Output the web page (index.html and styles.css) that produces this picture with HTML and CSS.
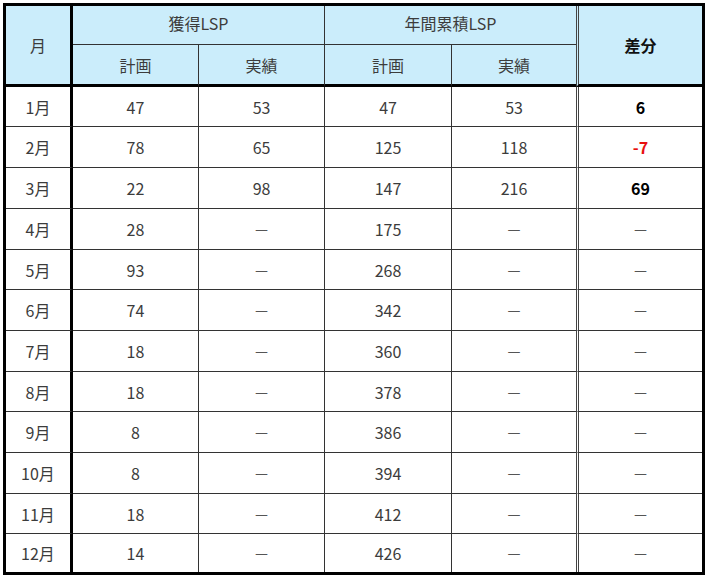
FILE: index.html
```html
<!DOCTYPE html>
<html lang="ja">
<head>
<meta charset="utf-8">
<title>LSP</title>
<link rel="stylesheet" href="styles.css">
</head>
<body>
<table class="lsp">
  <colgroup>
    <col class="c-month">
    <col class="c-a">
    <col class="c-b">
    <col class="c-c">
    <col class="c-d">
    <col class="c-diff">
  </colgroup>
  <thead>
    <tr class="h1">
      <th rowspan="2" class="month">月</th>
      <th colspan="2" class="grp sep">獲得LSP</th>
      <th colspan="2" class="grp">年間累積LSP</th>
      <th rowspan="2" class="diff">差分</th>
    </tr>
    <tr class="h2">
      <th class="sep">計画</th>
      <th class="sep">実績</th>
      <th class="sep">計画</th>
      <th>実績</th>
    </tr>
  </thead>
  <tbody>
    <tr><td class="month">1月</td><td class="sep">47</td><td class="sep">53</td><td class="sep">47</td><td>53</td><td class="diff strong">6</td></tr>
    <tr><td class="month">2月</td><td class="sep">78</td><td class="sep">65</td><td class="sep">125</td><td>118</td><td class="diff strong neg">-7</td></tr>
    <tr><td class="month">3月</td><td class="sep">22</td><td class="sep">98</td><td class="sep">147</td><td>216</td><td class="diff strong">69</td></tr>
    <tr><td class="month">4月</td><td class="sep">28</td><td class="sep dash">－</td><td class="sep">175</td><td class="dash">－</td><td class="diff dash">－</td></tr>
    <tr><td class="month">5月</td><td class="sep">93</td><td class="sep dash">－</td><td class="sep">268</td><td class="dash">－</td><td class="diff dash">－</td></tr>
    <tr><td class="month">6月</td><td class="sep">74</td><td class="sep dash">－</td><td class="sep">342</td><td class="dash">－</td><td class="diff dash">－</td></tr>
    <tr><td class="month">7月</td><td class="sep">18</td><td class="sep dash">－</td><td class="sep">360</td><td class="dash">－</td><td class="diff dash">－</td></tr>
    <tr><td class="month">8月</td><td class="sep">18</td><td class="sep dash">－</td><td class="sep">378</td><td class="dash">－</td><td class="diff dash">－</td></tr>
    <tr><td class="month">9月</td><td class="sep">8</td><td class="sep dash">－</td><td class="sep">386</td><td class="dash">－</td><td class="diff dash">－</td></tr>
    <tr><td class="month">10月</td><td class="sep">8</td><td class="sep dash">－</td><td class="sep">394</td><td class="dash">－</td><td class="diff dash">－</td></tr>
    <tr><td class="month">11月</td><td class="sep">18</td><td class="sep dash">－</td><td class="sep">412</td><td class="dash">－</td><td class="diff dash">－</td></tr>
    <tr><td class="month">12月</td><td class="sep">14</td><td class="sep dash">－</td><td class="sep">426</td><td class="dash">－</td><td class="diff dash">－</td></tr>
  </tbody>
</table>
</body>
</html>
```
FILE: styles.css
```css
html, body {
  margin: 0;
  padding: 0;
  background: #fff;
}

body {
  font-family: "Noto Sans CJK JP", "Noto Sans", sans-serif;
  font-size: 16px;
  color: #3c3c3c;
}

.lsp {
  box-sizing: border-box;
  margin: 3px 0 0 3px;
  width: 702px;
  height: 572px;
  table-layout: fixed;
  border-collapse: separate;
  border-spacing: 0;
  border: 3px solid #000;
}

.c-month { width: 67px; }
.c-a { width: 126px; }
.c-b { width: 126px; }
.c-c { width: 127px; }
.c-d { width: 124px; }
.c-diff { width: 126px; }

.lsp th,
.lsp td {
  padding: 0;
  text-align: center;
  vertical-align: middle;
  font-weight: normal;
  line-height: 1;
}

.lsp th {
  background: #cbedfb;
}

.h1 { height: 39px; }
.h2 { height: 42px; }

.h1 .grp {
  border-bottom: 1px solid #333;
  padding-bottom: 4px;
}

.h2 th {
  border-bottom: 3px solid #000;
}

.lsp th.month {
  border-right: 3px solid #000;
  border-bottom: 3px solid #000;
}

.lsp th.diff {
  border-left: 3px double #444;
  border-bottom: 3px solid #000;
  font-weight: bold;
  color: #111;
}

.lsp .sep {
  border-right: 1px solid #333;
}

.lsp td {
  border-bottom: 1px solid #333;
}

.lsp tbody tr { height: 41px; }
.lsp tbody tr:nth-child(1),
.lsp tbody tr:nth-child(5),
.lsp tbody tr:nth-child(8),
.lsp tbody tr:nth-child(11) { height: 40px; }
.lsp tbody tr:last-child { height: 38px; }
.lsp tbody tr:last-child td { border-bottom: none; }

.lsp td.month {
  border-right: 3px solid #000;
}

.lsp td.diff {
  border-left: 3px double #444;
}

.lsp td.strong {
  font-weight: bold;
  color: #000;
}

.lsp td.neg {
  color: #e81010;
}

.lsp td.dash {
  color: #555;
}
```
